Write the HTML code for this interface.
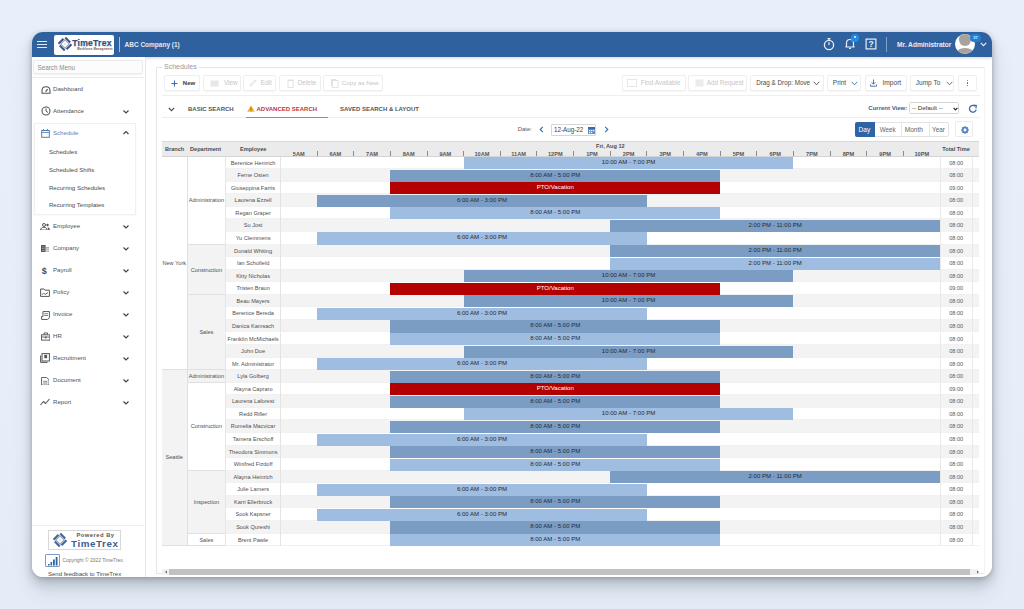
<!DOCTYPE html>
<html><head><meta charset="utf-8">
<style>
*{box-sizing:border-box;margin:0;padding:0}
html,body{width:1024px;height:609px;overflow:hidden}
body{font-family:"Liberation Sans",sans-serif;background:linear-gradient(180deg,#e8effa 0%,#e6eef9 60%,#e4ecf7 100%);position:relative}
.abs{position:absolute}
#win{position:absolute;left:32px;top:32px;width:960px;height:544.7px;border-radius:11px;background:#fff;overflow:hidden;box-shadow:0 1px 5px rgba(50,58,70,.28),0 7px 12px rgba(50,58,70,.22),0 14px 22px rgba(50,58,70,.10)}
#L{position:absolute;left:-32px;top:-32px;width:1024px;height:609px}
.menu{position:absolute;left:53px;font-size:6.1px;color:#505050;line-height:8px;margin-top:-0.5px}
.chev{position:absolute;left:122px;width:8px;height:6px}
.sub{position:absolute;left:49px;font-size:6.05px;color:#4a4a4a;line-height:8px;margin-top:-0.9px}
.btn{position:absolute;top:75.3px;height:15.7px;border:0.8px solid #efefef;border-radius:2px;background:#fff;font-size:6.6px;line-height:12px;color:#c6c6c6;white-space:nowrap;box-shadow:0 0.5px 1px rgba(0,0,0,.04)}
.btn.on{color:#333}
.btn span{top:1.1px}
/* grid */
.rw{position:absolute;left:162px;width:816.5px;height:12.564px;border-bottom:0.5px solid #f1f1f1}
.emp{position:absolute;left:225.2px;width:55.8px;height:12.55px;line-height:12.55px;text-align:center;font-size:5.6px;color:#505050;white-space:nowrap;border-left:0.6px solid #e6e6e6;border-right:0.6px solid #e3e3e3}
.tt{position:absolute;left:939.7px;width:33px;height:12.564px;line-height:12.564px;text-align:center;font-size:5.6px;color:#5a5a5a;border-left:0.6px solid #e9e9e9;border-right:0.6px solid #e9e9e9}
.bar{position:absolute;height:12.1px;line-height:11.4px;text-align:center;font-size:6.05px;color:#232b36;white-space:nowrap;overflow:hidden}
.bar.lt{background:#9ebde0}
.bar.dk{background:#7b9cc3}
.bar.red{background:#b30000;color:#fff}
.dept{position:absolute;left:187.5px;width:37.8px;text-align:center;font-size:5.6px;color:#505050;white-space:nowrap;border-bottom:0.6px solid #e0e0e0}
.br{position:absolute;left:162px;width:25.5px;text-align:center;font-size:5.6px;color:#505050;white-space:nowrap;border-right:0.6px solid #e0e0e0;border-bottom:0.6px solid #e0e0e0}
.hl{position:absolute;top:149.5px;width:36px;text-align:center;font-size:5.6px;font-weight:bold;color:#555;line-height:8px}
.tk{position:absolute;top:150.8px;width:0.9px;height:5px;background:#8a8a8a}
.hdr{position:absolute;top:145px;font-size:5.6px;font-weight:bold;color:#4d4d4d;line-height:8px}
</style></head><body>
<div id="win">
<div id="L">
  <!-- HEADER -->
  <div class="abs" style="left:32px;top:32px;width:960px;height:24.5px;background:#2e619e;box-shadow:0 1px 3px rgba(0,0,0,.18)"></div>
  <div class="abs" style="left:37px;top:41px;width:10px;height:1.3px;background:#dfe8f4"></div>
  <div class="abs" style="left:37px;top:44px;width:10px;height:1.3px;background:#dfe8f4"></div>
  <div class="abs" style="left:37px;top:47px;width:10px;height:1.3px;background:#dfe8f4"></div>
  <div class="abs" style="left:54px;top:34.8px;width:60.2px;height:19.8px;background:#fff;border-radius:2px">
    <svg class="abs" style="left:2.6px;top:1.6px" width="16" height="16" viewBox="0 0 16 16">
      <g transform="rotate(45 8 8)">
        <rect x="3.6" y="2.2" width="7" height="2" fill="#3f5688"/>
        <rect x="11.8" y="3.6" width="2" height="7" fill="#3f5688"/>
        <rect x="5.4" y="11.8" width="7" height="2" fill="#3f5688"/>
        <rect x="2.2" y="5.4" width="2" height="7" fill="#3f5688"/>
        <rect x="5" y="5" width="6" height="6" fill="none" stroke="#a3adbf" stroke-width="1.3"/>
        <rect x="7.3" y="7.3" width="1.4" height="1.4" fill="#c8ced8"/>
      </g>
    </svg>
    <div class="abs" style="left:18.2px;top:3.2px;font-size:8.6px;font-weight:bold;color:#34507f;letter-spacing:0.25px;line-height:10px;-webkit-text-stroke:0.25px #34507f">TimeTrex</div>
    <div class="abs" style="left:23px;top:12.3px;font-size:2.9px;font-weight:bold;color:#6e5247;line-height:4px;letter-spacing:0.15px">Workforce Management</div>
  </div>
  <div class="abs" style="left:119px;top:37px;width:0.8px;height:15px;background:#a9c0dd"></div>
  <div class="abs" style="left:124.5px;top:39.5px;font-size:6.5px;font-weight:bold;color:#e3ebf6;line-height:9px">ABC Company (1)</div>
  <svg class="abs" style="left:823px;top:37px" width="12" height="14" viewBox="0 0 12 14">
    <circle cx="6" cy="8" r="4.6" fill="none" stroke="#e8eef7" stroke-width="1.3"/>
    <rect x="4.5" y="1" width="3" height="1.2" fill="#e8eef7"/>
    <line x1="6" y1="2" x2="6" y2="3.4" stroke="#e8eef7" stroke-width="1.2"/>
    <line x1="6" y1="8" x2="6" y2="5.3" stroke="#e8eef7" stroke-width="1.2"/>
  </svg>
  <svg class="abs" style="left:843.8px;top:36px" width="12" height="14" viewBox="0 0 12 14">
    <path d="M2.5 10.5 L2.5 7 Q2.5 3.5 6 3.5 Q9.5 3.5 9.5 7 L9.5 10.5 L10.5 11 L1.5 11 Z" fill="none" stroke="#e8eef7" stroke-width="1.2"/>
    <path d="M5 12.3 L7 12.3" stroke="#e8eef7" stroke-width="1.2"/>
  </svg>
  <div class="abs" style="left:851px;top:34px;width:7.6px;height:7.6px;border-radius:50%;background:#238be6"><div class="abs" style="left:3.1px;top:2.4px;width:1.6px;height:1.6px;border-radius:50%;background:#d8ebfb"></div></div>
  <svg class="abs" style="left:864.8px;top:38px" width="12" height="12" viewBox="0 0 12 12">
    <rect x="1.1" y="1.1" width="9.8" height="9.8" fill="none" stroke="#e8eef7" stroke-width="1.2"/>
    <text x="6" y="9.3" font-size="8.6" font-family="Liberation Sans" font-weight="bold" fill="#e8eef7" text-anchor="middle">?</text>
  </svg>
  <div class="abs" style="left:886px;top:37px;width:0.8px;height:15px;background:#7fa0c8"></div>
  <div class="abs" style="left:897px;top:40.5px;font-size:6.6px;font-weight:bold;color:#e8eef7;line-height:8px">Mr. Administrator</div>
  <div class="abs" style="left:954.8px;top:34.4px;width:20.2px;height:20px;border-radius:50%;background:#fff;overflow:hidden">
    <div class="abs" style="left:3.8px;top:-1px;width:12px;height:12.5px;border-radius:50%;background:#a8a29e"></div>
    <div class="abs" style="left:0px;top:13.5px;width:20px;height:14px;border-radius:50%;background:#a8a29e"></div>
  </div>
  <div class="abs" style="left:970px;top:34px;width:11px;height:8.2px;border-radius:4px;background:#1f7fd6;font-size:4px;font-weight:bold;color:#e6f0fb;text-align:center;line-height:8.2px">37</div>
  <svg class="abs" style="left:979.7px;top:42px" width="7" height="5" viewBox="0 0 7 5"><path d="M0.8 0.8 L3.5 3.6 L6.2 0.8" fill="none" stroke="#e8eef7" stroke-width="1.2"/></svg>

  <!-- SIDEBAR -->
  <div class="abs" style="left:32px;top:56.5px;width:114px;height:520px;background:#fff;border-right:1px solid #e6e6e6"></div>
  <div class="abs" style="left:33.3px;top:59.6px;width:110.2px;height:14.6px;border:0.8px solid #ebebeb;background:#fcfcfc;border-radius:1.5px;box-shadow:0 0.8px 1.2px rgba(0,0,0,.06)"></div>
  <div class="abs" style="left:37.5px;top:63.5px;font-size:6.3px;color:#8a8a8a;line-height:8px">Search Menu</div>
  <div class="abs" style="left:32px;top:77px;width:114px;height:0.8px;background:#ececec"></div>
    <!-- menu items -->
  <svg class="abs" style="left:40.5px;top:85.5px" width="10" height="8" viewBox="0 0 10 8"><path d="M1 7.3 L1 4.5 Q1 0.8 5 0.8 Q9 0.8 9 4.5 L9 7.3 Z" fill="none" stroke="#555" stroke-width="1.1" stroke-linejoin="round"/><line x1="4.6" y1="5.6" x2="6.6" y2="3.2" stroke="#555" stroke-width="1.2"/></svg>
  <div class="menu" style="top:85px">Dashboard</div>

  <svg class="abs" style="left:40.5px;top:106px" width="10" height="10" viewBox="0 0 10 10"><circle cx="5" cy="5" r="4" fill="none" stroke="#555" stroke-width="1.1"/><path d="M5 2.5 L5 5 L7 6.5" fill="none" stroke="#555" stroke-width="1"/></svg>
  <div class="menu" style="top:107px">Attendance</div>
  <svg class="chev" style="top:108.5px" viewBox="0 0 8 6"><path d="M1.5 1.5 L4 4 L6.5 1.5" fill="none" stroke="#444" stroke-width="1.2"/></svg>

  <div class="abs" style="left:34.3px;top:122.8px;width:101.7px;height:92px;border:0.8px solid #f0f0f0;background:#fff;box-shadow:0 0.5px 1.5px rgba(0,0,0,.06)"></div>
  <svg class="abs" style="left:40.5px;top:128.8px" width="9" height="9" viewBox="0 0 9 9"><rect x="0.7" y="1.5" width="7.6" height="6.8" fill="none" stroke="#4f7db8" stroke-width="1"/><line x1="0.7" y1="3.5" x2="8.3" y2="3.5" stroke="#4f7db8" stroke-width="0.8"/><line x1="2.5" y1="0" x2="2.5" y2="2.2" stroke="#4f7db8" stroke-width="0.9"/><line x1="6.5" y1="0" x2="6.5" y2="2.2" stroke="#4f7db8" stroke-width="0.9"/></svg>
  <div class="menu" style="top:129px;color:#5783bb">Schedule</div>
  <svg class="chev" style="top:130px" viewBox="0 0 8 6"><path d="M1.5 4 L4 1.5 L6.5 4" fill="none" stroke="#444" stroke-width="1.2"/></svg>
  <div class="sub" style="top:149px">Schedules</div>
  <div class="sub" style="top:167.2px">Scheduled Shifts</div>
  <div class="sub" style="top:184.8px">Recurring Schedules</div>
  <div class="sub" style="top:202.2px">Recurring Templates</div>

  <svg class="abs" style="left:40px;top:222.6px" width="10" height="7.6" viewBox="0 0 10 7.6"><circle cx="4" cy="2" r="1.5" fill="none" stroke="#555" stroke-width="1"/><path d="M0.6 7.1 C0.6 5.2 2 4.3 3.9 4.3 C5.8 4.3 7.2 5.2 7.2 7.1 Z" fill="none" stroke="#555" stroke-width="1" stroke-linejoin="round"/><circle cx="7.5" cy="2" r="1.2" fill="#555"/><path d="M7.6 4.2 C9 4.3 9.8 5.2 9.8 7.3 L8.2 7.3 C8.2 5.8 8 5 7.6 4.2 Z" fill="#555"/></svg>
  <div class="menu" style="top:222px">Employee</div>
  <svg class="chev" style="top:223.5px" viewBox="0 0 8 6"><path d="M1.5 1.5 L4 4 L6.5 1.5" fill="none" stroke="#444" stroke-width="1.2"/></svg>

  <svg class="abs" style="left:40.8px;top:244.6px" width="8.6" height="7.6" viewBox="0 0 8.6 7.6"><rect x="0" y="0" width="4.6" height="7.6" fill="#555"/><rect x="4.6" y="2" width="3.8" height="5.6" fill="#9a9a9a"/><rect x="5.2" y="2.6" width="2.6" height="4.4" fill="#d0d0d0"/><rect x="0.8" y="1.6" width="3" height="0.6" fill="#bbb"/><rect x="0.8" y="3.4" width="3" height="0.6" fill="#bbb"/><rect x="0.8" y="5.2" width="3" height="0.6" fill="#bbb"/></svg>
  <div class="menu" style="top:244px">Company</div>
  <svg class="chev" style="top:245.5px" viewBox="0 0 8 6"><path d="M1.5 1.5 L4 4 L6.5 1.5" fill="none" stroke="#444" stroke-width="1.2"/></svg>

  <div class="abs" style="left:41.8px;top:265.5px;font-size:9px;font-weight:bold;color:#4a4a4a;line-height:10px">$</div>
  <div class="menu" style="top:266px">Payroll</div>
  <svg class="chev" style="top:267.5px" viewBox="0 0 8 6"><path d="M1.5 1.5 L4 4 L6.5 1.5" fill="none" stroke="#444" stroke-width="1.2"/></svg>

  <svg class="abs" style="left:40px;top:287.5px" width="10" height="9" viewBox="0 0 10 9"><path d="M0.6 1 L4 1 L5 2.2 L9.4 2.2 L9.4 8.4 L0.6 8.4 Z" fill="none" stroke="#555" stroke-width="1"/><path d="M2 6.8 L3.5 5 L5 6.5 L8 4.5" fill="none" stroke="#555" stroke-width="0.9"/></svg>
  <div class="menu" style="top:288px">Policy</div>
  <svg class="chev" style="top:289.5px" viewBox="0 0 8 6"><path d="M1.5 1.5 L4 4 L6.5 1.5" fill="none" stroke="#444" stroke-width="1.2"/></svg>

  <svg class="abs" style="left:40.8px;top:310.5px" width="9" height="9" viewBox="0 0 9 10" preserveAspectRatio="none"><path d="M2 0.6 L8.4 0.6 L8.4 7.5 L6.5 9.4 L0.6 9.4 L0.6 6 L2 6 Z" fill="none" stroke="#555" stroke-width="1"/><line x1="3.3" y1="3" x2="7" y2="3" stroke="#555" stroke-width="0.8"/><line x1="3.3" y1="5" x2="7" y2="5" stroke="#555" stroke-width="0.8"/></svg>
  <div class="menu" style="top:310px">Invoice</div>
  <svg class="chev" style="top:311.5px" viewBox="0 0 8 6"><path d="M1.5 1.5 L4 4 L6.5 1.5" fill="none" stroke="#444" stroke-width="1.2"/></svg>

  <svg class="abs" style="left:40.5px;top:332px" width="9.5" height="8.5" viewBox="0 0 10 9" preserveAspectRatio="none"><rect x="0.6" y="3" width="8.8" height="5.6" fill="none" stroke="#555" stroke-width="1"/><path d="M3.2 3 L3.2 1 L6.8 1 L6.8 3" fill="none" stroke="#555" stroke-width="1"/><line x1="0.6" y1="5.3" x2="9.4" y2="5.3" stroke="#555" stroke-width="0.9"/><circle cx="5" cy="5.8" r="1" fill="#555"/></svg>
  <div class="menu" style="top:332px">HR</div>
  <svg class="chev" style="top:333.5px" viewBox="0 0 8 6"><path d="M1.5 1.5 L4 4 L6.5 1.5" fill="none" stroke="#444" stroke-width="1.2"/></svg>

  <svg class="abs" style="left:40px;top:353px" width="10" height="10" viewBox="0 0 10 10"><rect x="2" y="0.6" width="7.4" height="7.4" fill="none" stroke="#555" stroke-width="1"/><path d="M0.6 2.5 L0.6 9.4 L7.5 9.4" fill="none" stroke="#555" stroke-width="1"/><rect x="4.3" y="1.8" width="2.8" height="3.4" fill="#555"/></svg>
  <div class="menu" style="top:354px">Recruitment</div>
  <svg class="chev" style="top:355.5px" viewBox="0 0 8 6"><path d="M1.5 1.5 L4 4 L6.5 1.5" fill="none" stroke="#444" stroke-width="1.2"/></svg>

  <svg class="abs" style="left:40.8px;top:376.8px" width="8.6" height="8.6" viewBox="0 0 9 10" preserveAspectRatio="none"><path d="M0.6 0.6 L5.8 0.6 L8.4 3.2 L8.4 9.4 L0.6 9.4 Z" fill="none" stroke="#555" stroke-width="1"/><line x1="2.3" y1="5" x2="6.7" y2="5" stroke="#555" stroke-width="0.8"/><line x1="2.3" y1="7" x2="6.7" y2="7" stroke="#555" stroke-width="0.8"/></svg>
  <div class="menu" style="top:376px">Document</div>
  <svg class="chev" style="top:377.5px" viewBox="0 0 8 6"><path d="M1.5 1.5 L4 4 L6.5 1.5" fill="none" stroke="#444" stroke-width="1.2"/></svg>

  <svg class="abs" style="left:40px;top:398px" width="10" height="8" viewBox="0 0 10 8"><path d="M0.5 7 L3.5 3.5 L5.5 5.5 L9.5 1" fill="none" stroke="#555" stroke-width="1.1"/></svg>
  <div class="menu" style="top:398px">Report</div>
  <svg class="chev" style="top:399.5px" viewBox="0 0 8 6"><path d="M1.5 1.5 L4 4 L6.5 1.5" fill="none" stroke="#444" stroke-width="1.2"/></svg>

  <!-- footer -->
  <div class="abs" style="left:32px;top:524.5px;width:114px;height:0.8px;background:#efefef"></div>
  <div class="abs" style="left:48.4px;top:529.5px;width:72.2px;height:20px;border:0.8px solid #d8d8d8;background:#fff">
    <svg class="abs" style="left:2.5px;top:1.5px" width="16" height="16" viewBox="0 0 16 16">
      <g transform="rotate(45 8 8)">
        <rect x="3.6" y="2.2" width="7" height="2.1" fill="#46659a"/>
        <rect x="11.7" y="3.6" width="2.1" height="7" fill="#46659a"/>
        <rect x="5.4" y="11.7" width="7" height="2.1" fill="#46659a"/>
        <rect x="2.2" y="5.4" width="2.1" height="7" fill="#46659a"/>
        <rect x="5" y="5" width="6" height="6" fill="none" stroke="#9aa7bd" stroke-width="1.3"/>
        <rect x="7.3" y="7.3" width="1.4" height="1.4" fill="#c8ced8"/>
      </g>
    </svg>
    <div class="abs" style="left:27px;top:1.6px;font-size:5.8px;font-weight:bold;color:#575757;line-height:7px;letter-spacing:0.5px">Powered By</div>
    <div class="abs" style="left:21.6px;top:7.2px;font-size:9.8px;font-weight:bold;color:#3d5f93;line-height:11px;letter-spacing:0.6px">TimeTrex</div>
  </div>
  <div class="abs" style="left:44.5px;top:554px;width:15.2px;height:13px;border:0.8px solid #7c9ac7;border-radius:1px;background:#fff">
    <svg class="abs" style="left:1.5px;top:1px" width="12" height="10" viewBox="0 0 12 10"><rect x="1" y="8" width="1.6" height="1.5" fill="#2f63a6"/><rect x="3.5" y="6" width="1.6" height="3.5" fill="#2f63a6"/><rect x="6" y="3.5" width="1.8" height="6" fill="#2f63a6"/><rect x="8.7" y="1" width="1.8" height="8.5" fill="#2f63a6"/></svg>
  </div>
  <div class="abs" style="left:62.5px;top:556.5px;font-size:4.95px;color:#777;line-height:7px">Copyright © 2022 TimeTrex.</div>
  <div class="abs" style="left:48px;top:570.5px;font-size:6px;color:#4a4a4a;line-height:7px;text-decoration:underline">Send feedback to TimeTrex</div>


  <!-- CONTENT -->
    <!-- fieldset -->
  <div class="abs" style="left:156.1px;top:67px;width:828.9px;height:506.8px;border:0.8px solid #e6e6e6;border-right-color:#f3f3f3"></div>
  <div class="abs" style="left:162px;top:62px;padding:0 2px;background:#fff;font-size:7px;color:#999;line-height:9px">Schedules</div>

  <!-- toolbar -->
  <div class="btn on" style="left:164.3px;width:35.7px">
    <svg class="abs" style="left:5.5px;top:3.5px" width="7" height="7" viewBox="0 0 7 7"><path d="M3.5 0.5 V6.5 M0.5 3.5 H6.5" stroke="#3b6db0" stroke-width="1.1"/></svg>
    <span class="abs" style="left:17.5px;font-weight:bold;font-size:6px;color:#3a3a3a">New</span>
  </div>
  <div class="btn" style="left:202.9px;width:38px">
    <svg class="abs" style="left:6px;top:3.5px" width="9" height="7" viewBox="0 0 9 7"><rect x="0.5" y="0.5" width="8" height="6" fill="#e8e8e8"/></svg>
    <span class="abs" style="left:20px;font-size:6.4px">View</span>
  </div>
  <div class="btn" style="left:242.8px;width:33.6px">
    <svg class="abs" style="left:5.5px;top:3px" width="8" height="8" viewBox="0 0 8 8"><path d="M1 7 L2 4.5 L6 0.8 L7.2 2 L3.5 5.8 Z" fill="none" stroke="#d8d8d8" stroke-width="0.8"/></svg>
    <span class="abs" style="left:17px;font-size:6.4px">Edit</span>
  </div>
  <div class="btn" style="left:278.75px;width:41.85px">
    <svg class="abs" style="left:7px;top:2.5px" width="7" height="9" viewBox="0 0 7 9"><rect x="1" y="1.5" width="5" height="7" fill="none" stroke="#dcdcdc" stroke-width="0.8"/><line x1="0.5" y1="1" x2="6.5" y2="1" stroke="#dcdcdc" stroke-width="0.8"/></svg>
    <span class="abs" style="left:18px;font-size:6.4px">Delete</span>
  </div>
  <div class="btn" style="left:323.3px;width:59.4px">
    <svg class="abs" style="left:7px;top:2.5px" width="8" height="9" viewBox="0 0 8 9"><rect x="1.5" y="1.5" width="5.5" height="7" fill="none" stroke="#dcdcdc" stroke-width="0.8"/><path d="M0.5 7 V0.5 H5" fill="none" stroke="#dcdcdc" stroke-width="0.8"/></svg>
    <span class="abs" style="left:17.5px;font-size:6.2px">Copy as New</span>
  </div>

  <div class="btn" style="left:622.3px;width:63.3px">
    <svg class="abs" style="left:4px;top:3px" width="10" height="8" viewBox="0 0 10 8"><rect x="0.5" y="0.5" width="9" height="7" fill="none" stroke="#e2e2e2" stroke-width="0.8"/></svg>
    <span class="abs" style="left:17.5px;font-size:6.4px">Find Available</span>
  </div>
  <div class="btn" style="left:688.2px;width:58.6px">
    <svg class="abs" style="left:5.5px;top:3px" width="9" height="8" viewBox="0 0 9 8"><rect x="0.5" y="0.5" width="8" height="7" fill="#ececec"/></svg>
    <span class="abs" style="left:17.5px;font-size:6.4px">Add Request</span>
  </div>
  <div class="btn on" style="left:750.4px;width:73.6px">
    <span class="abs" style="left:4.8px;font-size:6.3px;color:#4a4a4a">Drag &amp; Drop: Move</span>
    <svg class="abs" style="left:62px;top:4.5px" width="7" height="5" viewBox="0 0 7 5"><path d="M0.7 0.8 L3.5 3.8 L6.3 0.8" fill="none" stroke="#4a4a4a" stroke-width="0.9"/></svg>
  </div>
  <div class="btn on" style="left:827px;width:34px">
    <span class="abs" style="left:4.8px;font-size:6.5px;color:#4a4a4a">Print</span>
    <svg class="abs" style="left:23px;top:4.5px" width="7" height="5" viewBox="0 0 7 5"><path d="M0.7 0.8 L3.5 3.8 L6.3 0.8" fill="none" stroke="#3d6aa8" stroke-width="0.9"/></svg>
  </div>
  <div class="btn on" style="left:865px;width:41.6px">
    <svg class="abs" style="left:3.5px;top:3px" width="7" height="8" viewBox="0 0 7 8"><path d="M3.5 0.5 V5 M1.5 3.2 L3.5 5.2 L5.5 3.2 M0.5 5.5 V7.2 H6.5 V5.5" fill="none" stroke="#3d6aa8" stroke-width="0.9"/></svg>
    <span class="abs" style="left:16.5px;font-size:6.6px;color:#4a4a4a">Import</span>
  </div>
  <div class="btn on" style="left:910px;width:44px">
    <span class="abs" style="left:4.8px;font-size:6.5px;color:#4a4a4a">Jump To</span>
    <svg class="abs" style="left:34.5px;top:4.5px" width="7" height="5" viewBox="0 0 7 5"><path d="M0.7 0.8 L3.5 3.8 L6.3 0.8" fill="none" stroke="#3d6aa8" stroke-width="0.9"/></svg>
  </div>
  <div class="btn on" style="left:957.6px;width:19px">
    <div class="abs" style="left:8px;top:3.3px;width:1.3px;height:1.3px;background:#3d6aa8;border-radius:50%"></div>
    <div class="abs" style="left:8px;top:6px;width:1.3px;height:1.3px;background:#3d6aa8;border-radius:50%"></div>
    <div class="abs" style="left:8px;top:8.7px;width:1.3px;height:1.3px;background:#3d6aa8;border-radius:50%"></div>
  </div>
  <div class="abs" style="left:162px;top:94.7px;width:818px;height:0.8px;background:#efefef"></div>

  <!-- tabs -->
  <svg class="abs" style="left:167.5px;top:106.5px" width="7" height="5" viewBox="0 0 7 5"><path d="M0.8 0.8 L3.5 3.6 L6.2 0.8" fill="none" stroke="#444" stroke-width="1.1"/></svg>
  <div class="abs" style="left:188px;top:104.5px;font-size:6px;font-weight:bold;color:#555;line-height:8px">BASIC SEARCH</div>
  <svg class="abs" style="left:247px;top:105px" width="8" height="7" viewBox="0 0 8 7"><path d="M4 0.3 L7.8 6.8 L0.2 6.8 Z" fill="#f2b134"/><rect x="3.6" y="2.4" width="0.8" height="2.5" fill="#8a5a00"/><rect x="3.6" y="5.4" width="0.8" height="0.8" fill="#8a5a00"/></svg>
  <div class="abs" style="left:256.5px;top:104.5px;font-size:6px;font-weight:bold;color:#c23636;line-height:8px">ADVANCED SEARCH</div>
  <div class="abs" style="left:340px;top:104.5px;font-size:6px;font-weight:bold;color:#555;line-height:8px">SAVED SEARCH &amp; LAYOUT</div>
  <div class="abs" style="left:162px;top:117.3px;width:818px;height:0.8px;background:#eeeeee"></div>
  <div class="abs" style="left:245.8px;top:116.5px;width:82px;height:1.5px;background:#5b9be0"></div>

  <div class="abs" style="left:868.3px;top:104px;font-size:6px;font-weight:bold;color:#3b5e93;line-height:8px">Current View:</div>
  <div class="abs" style="left:908.5px;top:102.4px;width:50px;height:12px;border:0.8px solid #d6d6d6;border-radius:1.5px;background:#fff">
    <span class="abs" style="left:2.5px;top:0.9px;font-size:6.1px;color:#333;line-height:8px">-- Default --</span>
    <svg class="abs" style="left:43px;top:3.8px" width="5" height="4" viewBox="0 0 5 4"><path d="M0.6 0.8 L2.5 2.9 L4.4 0.8" fill="none" stroke="#222" stroke-width="1.1"/></svg>
  </div>
  <svg class="abs" style="left:967.8px;top:103.8px" width="10" height="10" viewBox="0 0 10 10"><path d="M8.2 5.6 A3.4 3.4 0 1 1 7.2 2.3" fill="none" stroke="#3d6aa8" stroke-width="1.3"/><path d="M5.6 1.2 L8.3 1.6 L7.9 4.3" fill="none" stroke="#3d6aa8" stroke-width="1.2"/></svg>

  <!-- date -->
  <div class="abs" style="left:517.8px;top:125px;font-size:5.9px;color:#555;line-height:8px">Date:</div>
  <svg class="abs" style="left:539px;top:126px" width="5" height="7" viewBox="0 0 5 7"><path d="M3.8 0.8 L1.2 3.5 L3.8 6.2" fill="none" stroke="#3d6aa8" stroke-width="1.1"/></svg>
  <div class="abs" style="left:550.9px;top:123.5px;width:45.5px;height:12px;border:0.8px solid #d6d6d6;border-radius:1px;background:#fff">
    <span class="abs" style="left:2px;top:1.5px;font-size:6.3px;color:#444;line-height:8px">12-Aug-22</span>
    <svg class="abs" style="left:36px;top:2px" width="7" height="7" viewBox="0 0 7 7"><rect x="0" y="0" width="7" height="7" fill="#5f8ac0"/><rect x="0" y="0" width="7" height="2" fill="#3c6aa5"/><rect x="1" y="3" width="1.3" height="1.2" fill="#fff"/><rect x="3" y="3" width="1.3" height="1.2" fill="#fff"/><rect x="5" y="3" width="1.3" height="1.2" fill="#fff"/><rect x="1" y="5" width="1.3" height="1.2" fill="#fff"/><rect x="3" y="5" width="1.3" height="1.2" fill="#fff"/></svg>
  </div>
  <svg class="abs" style="left:604px;top:126px" width="5" height="7" viewBox="0 0 5 7"><path d="M1.2 0.8 L3.8 3.5 L1.2 6.2" fill="none" stroke="#3d6aa8" stroke-width="1.1"/></svg>

  <!-- view buttons -->
  <div class="abs" style="left:855px;top:122.3px;width:93.5px;height:14.3px;border:0.8px solid #e3e3e3;border-radius:2px;background:#fff"></div>
  <div class="abs" style="left:855px;top:122.3px;width:20px;height:14.3px;background:#2d64a6;border-radius:2px 0 0 2px"></div>
  <div class="abs" style="left:858.5px;top:125.5px;font-size:6.6px;color:#fff;line-height:8px">Day</div>
  <div class="abs" style="left:900.6px;top:122.3px;width:0.8px;height:14.3px;background:#e6e6e6"></div>
  <div class="abs" style="left:928.6px;top:122.3px;width:0.8px;height:14.3px;background:#e6e6e6"></div>
  <div class="abs" style="left:879.7px;top:125.5px;font-size:6.3px;color:#666;line-height:8px">Week</div>
  <div class="abs" style="left:904.7px;top:125.5px;font-size:6.6px;color:#666;line-height:8px">Month</div>
  <div class="abs" style="left:932px;top:125.5px;font-size:6.4px;color:#666;line-height:8px">Year</div>
  <div class="abs" style="left:955px;top:121.3px;width:18px;height:15.5px;border:0.8px solid #ececec;border-radius:2px;background:#fff">
    <svg class="abs" style="left:4.8px;top:3.7px" width="8" height="8" viewBox="0 0 8 8"><path d="M4 0.3 L5 1.3 L6.6 1.4 L6.7 3 L7.7 4 L6.7 5 L6.6 6.6 L5 6.7 L4 7.7 L3 6.7 L1.4 6.6 L1.3 5 L0.3 4 L1.3 3 L1.4 1.4 L3 1.3 Z" fill="#5b86c4" stroke="#3d6aa8" stroke-width="0.6"/><circle cx="4" cy="4" r="1.4" fill="#fff"/></svg>
  </div>

  <!-- grid header -->
  <div class="abs" style="left:162px;top:141.3px;width:816.7px;height:15.3px;background:#ebebeb;border-top:0.8px solid #d9d9d9;border-bottom:0.8px solid #d4d4d4"></div>
  <div class="hdr" style="left:165px">Branch</div>
  <div class="hdr" style="left:190px">Department</div>
  <div class="hdr" style="left:240px">Employee</div>
  <div class="hdr" style="left:596px;top:142.2px">Fri, Aug 12</div>
  <div class="hdr" style="left:942.3px">Total Time</div>

  <!-- scrollbar -->
  <div class="abs" style="left:162px;top:569px;width:816px;height:5.5px;background:#f1f1f1"></div>
  <div class="abs" style="left:169.3px;top:569.2px;width:801px;height:5.5px;background:#c1c1c1"></div>
  <svg class="abs" style="left:163.5px;top:569.8px" width="4" height="4" viewBox="0 0 4 4"><path d="M3 0.5 L1 2 L3 3.5 Z" fill="#666"/></svg>
  <svg class="abs" style="left:975.5px;top:569.8px" width="4" height="4" viewBox="0 0 4 4"><path d="M1 0.5 L3 2 L1 3.5 Z" fill="#666"/></svg>

  <div class="rw" style="top:156.60px;background:#fff"></div>
<div class="rw" style="top:169.16px;background:#f3f3f3"></div>
<div class="rw" style="top:181.73px;background:#fff"></div>
<div class="rw" style="top:194.29px;background:#f3f3f3"></div>
<div class="rw" style="top:206.86px;background:#fff"></div>
<div class="rw" style="top:219.42px;background:#f3f3f3"></div>
<div class="rw" style="top:231.98px;background:#fff"></div>
<div class="rw" style="top:244.55px;background:#f3f3f3"></div>
<div class="rw" style="top:257.11px;background:#fff"></div>
<div class="rw" style="top:269.68px;background:#f3f3f3"></div>
<div class="rw" style="top:282.24px;background:#fff"></div>
<div class="rw" style="top:294.80px;background:#f3f3f3"></div>
<div class="rw" style="top:307.37px;background:#fff"></div>
<div class="rw" style="top:319.93px;background:#f3f3f3"></div>
<div class="rw" style="top:332.50px;background:#fff"></div>
<div class="rw" style="top:345.06px;background:#f3f3f3"></div>
<div class="rw" style="top:357.62px;background:#fff"></div>
<div class="rw" style="top:370.19px;background:#f3f3f3"></div>
<div class="rw" style="top:382.75px;background:#fff"></div>
<div class="rw" style="top:395.32px;background:#f3f3f3"></div>
<div class="rw" style="top:407.88px;background:#fff"></div>
<div class="rw" style="top:420.44px;background:#f3f3f3"></div>
<div class="rw" style="top:433.01px;background:#fff"></div>
<div class="rw" style="top:445.57px;background:#f3f3f3"></div>
<div class="rw" style="top:458.14px;background:#fff"></div>
<div class="rw" style="top:470.70px;background:#f3f3f3"></div>
<div class="rw" style="top:483.26px;background:#fff"></div>
<div class="rw" style="top:495.83px;background:#f3f3f3"></div>
<div class="rw" style="top:508.39px;background:#fff"></div>
<div class="rw" style="top:520.96px;background:#f3f3f3"></div>
<div class="rw" style="top:533.52px;background:#fff"></div>
<div class="emp" style="top:156.60px">Berenice Hemrich</div>
<div class="tt" style="top:156.60px">08:00</div>
<div class="emp" style="top:169.16px">Ferne Osten</div>
<div class="tt" style="top:169.16px">08:00</div>
<div class="emp" style="top:181.73px">Giuseppina Farris</div>
<div class="tt" style="top:181.73px">09:00</div>
<div class="emp" style="top:194.29px">Laurena Ezzell</div>
<div class="tt" style="top:194.29px">08:00</div>
<div class="emp" style="top:206.86px">Regan Graper</div>
<div class="tt" style="top:206.86px">08:00</div>
<div class="emp" style="top:219.42px">Su Jost</div>
<div class="tt" style="top:219.42px">08:00</div>
<div class="emp" style="top:231.98px">Yu Clemmens</div>
<div class="tt" style="top:231.98px">08:00</div>
<div class="emp" style="top:244.55px">Donald Whiting</div>
<div class="tt" style="top:244.55px">08:00</div>
<div class="emp" style="top:257.11px">Ian Schofield</div>
<div class="tt" style="top:257.11px">08:00</div>
<div class="emp" style="top:269.68px">Kitty Nicholas</div>
<div class="tt" style="top:269.68px">08:00</div>
<div class="emp" style="top:282.24px">Tristen Braun</div>
<div class="tt" style="top:282.24px">09:00</div>
<div class="emp" style="top:294.80px">Beau Mayers</div>
<div class="tt" style="top:294.80px">08:00</div>
<div class="emp" style="top:307.37px">Berenice Bereda</div>
<div class="tt" style="top:307.37px">08:00</div>
<div class="emp" style="top:319.93px">Danica Kamsach</div>
<div class="tt" style="top:319.93px">08:00</div>
<div class="emp" style="top:332.50px">Franklin McMichaels</div>
<div class="tt" style="top:332.50px">08:00</div>
<div class="emp" style="top:345.06px">John Doe</div>
<div class="tt" style="top:345.06px">08:00</div>
<div class="emp" style="top:357.62px">Mr. Administrator</div>
<div class="tt" style="top:357.62px">08:00</div>
<div class="emp" style="top:370.19px">Lyla Golberg</div>
<div class="tt" style="top:370.19px">08:00</div>
<div class="emp" style="top:382.75px">Alayna Capraro</div>
<div class="tt" style="top:382.75px">09:00</div>
<div class="emp" style="top:395.32px">Laurena Laforest</div>
<div class="tt" style="top:395.32px">08:00</div>
<div class="emp" style="top:407.88px">Redd Rifler</div>
<div class="tt" style="top:407.88px">08:00</div>
<div class="emp" style="top:420.44px">Romelia Macvicar</div>
<div class="tt" style="top:420.44px">08:00</div>
<div class="emp" style="top:433.01px">Tamera Erschoff</div>
<div class="tt" style="top:433.01px">08:00</div>
<div class="emp" style="top:445.57px">Theodora Simmons</div>
<div class="tt" style="top:445.57px">08:00</div>
<div class="emp" style="top:458.14px">Winifred Fizdoff</div>
<div class="tt" style="top:458.14px">08:00</div>
<div class="emp" style="top:470.70px">Alayna Heinrich</div>
<div class="tt" style="top:470.70px">08:00</div>
<div class="emp" style="top:483.26px">Julie Lamers</div>
<div class="tt" style="top:483.26px">08:00</div>
<div class="emp" style="top:495.83px">Karri Ellerbrock</div>
<div class="tt" style="top:495.83px">08:00</div>
<div class="emp" style="top:508.39px">Sook Kapsner</div>
<div class="tt" style="top:508.39px">08:00</div>
<div class="emp" style="top:520.96px">Sook Qureshi</div>
<div class="tt" style="top:520.96px">08:00</div>
<div class="emp" style="top:533.52px">Brent Pawle</div>
<div class="tt" style="top:533.52px">08:00</div>
<div class="bar lt" style="top:157.10px;left:463.65px;width:329.85px">10:00 AM - 7:00 PM</div>
<div class="bar dk" style="top:169.66px;left:390.35px;width:329.85px">8:00 AM - 5:00 PM</div>
<div class="bar red" style="top:182.23px;left:390.35px;width:329.85px">PTO/Vacation</div>
<div class="bar dk" style="top:194.79px;left:317.05px;width:329.85px">6:00 AM - 3:00 PM</div>
<div class="bar lt" style="top:207.36px;left:390.35px;width:329.85px">8:00 AM - 5:00 PM</div>
<div class="bar dk" style="top:219.92px;left:610.25px;width:329.85px">2:00 PM - 11:00 PM</div>
<div class="bar lt" style="top:232.48px;left:317.05px;width:329.85px">6:00 AM - 3:00 PM</div>
<div class="bar dk" style="top:245.05px;left:610.25px;width:329.85px">2:00 PM - 11:00 PM</div>
<div class="bar lt" style="top:257.61px;left:610.25px;width:329.85px">2:00 PM - 11:00 PM</div>
<div class="bar dk" style="top:270.18px;left:463.65px;width:329.85px">10:00 AM - 7:00 PM</div>
<div class="bar red" style="top:282.74px;left:390.35px;width:329.85px">PTO/Vacation</div>
<div class="bar dk" style="top:295.30px;left:463.65px;width:329.85px">10:00 AM - 7:00 PM</div>
<div class="bar lt" style="top:307.87px;left:317.05px;width:329.85px">6:00 AM - 3:00 PM</div>
<div class="bar dk" style="top:320.43px;left:390.35px;width:329.85px">8:00 AM - 5:00 PM</div>
<div class="bar lt" style="top:333.00px;left:390.35px;width:329.85px">8:00 AM - 5:00 PM</div>
<div class="bar dk" style="top:345.56px;left:463.65px;width:329.85px">10:00 AM - 7:00 PM</div>
<div class="bar lt" style="top:358.12px;left:317.05px;width:329.85px">6:00 AM - 3:00 PM</div>
<div class="bar dk" style="top:370.69px;left:390.35px;width:329.85px">8:00 AM - 5:00 PM</div>
<div class="bar red" style="top:383.25px;left:390.35px;width:329.85px">PTO/Vacation</div>
<div class="bar dk" style="top:395.82px;left:390.35px;width:329.85px">8:00 AM - 5:00 PM</div>
<div class="bar lt" style="top:408.38px;left:463.65px;width:329.85px">10:00 AM - 7:00 PM</div>
<div class="bar dk" style="top:420.94px;left:390.35px;width:329.85px">8:00 AM - 5:00 PM</div>
<div class="bar lt" style="top:433.51px;left:317.05px;width:329.85px">6:00 AM - 3:00 PM</div>
<div class="bar dk" style="top:446.07px;left:390.35px;width:329.85px">8:00 AM - 5:00 PM</div>
<div class="bar lt" style="top:458.64px;left:390.35px;width:329.85px">8:00 AM - 5:00 PM</div>
<div class="bar dk" style="top:471.20px;left:610.25px;width:329.85px">2:00 PM - 11:00 PM</div>
<div class="bar lt" style="top:483.76px;left:317.05px;width:329.85px">6:00 AM - 3:00 PM</div>
<div class="bar dk" style="top:496.33px;left:390.35px;width:329.85px">8:00 AM - 5:00 PM</div>
<div class="bar lt" style="top:508.89px;left:317.05px;width:329.85px">6:00 AM - 3:00 PM</div>
<div class="bar dk" style="top:521.46px;left:390.35px;width:329.85px">8:00 AM - 5:00 PM</div>
<div class="bar lt" style="top:534.02px;left:390.35px;width:329.85px">8:00 AM - 5:00 PM</div>
<div class="dept" style="top:156.60px;height:87.95px;line-height:87.95px;background:#fff">Administration</div>
<div class="dept" style="top:244.55px;height:50.26px;line-height:50.26px;background:#f3f3f3">Construction</div>
<div class="dept" style="top:294.80px;height:75.38px;line-height:75.38px;background:#f3f3f3">Sales</div>
<div class="dept" style="top:370.19px;height:12.56px;line-height:12.56px;background:#f3f3f3">Administration</div>
<div class="dept" style="top:382.75px;height:87.95px;line-height:87.95px;background:#fff">Construction</div>
<div class="dept" style="top:470.70px;height:62.82px;line-height:62.82px;background:#f3f3f3">Inspection</div>
<div class="dept" style="top:533.52px;height:12.56px;line-height:12.56px;background:#fff">Sales</div>
<div class="br" style="top:156.60px;height:213.59px;line-height:213.59px;background:#fff">New York</div>
<div class="br" style="top:370.19px;height:175.90px;line-height:175.90px;background:#f3f3f3">Seattle</div>
<div class="hl" style="left:280.72px">5AM</div>
<div class="hl" style="left:317.38px">6AM</div>
<div class="tk" style="left:316.55px"></div>
<div class="hl" style="left:354.02px">7AM</div>
<div class="tk" style="left:353.20px"></div>
<div class="hl" style="left:390.67px">8AM</div>
<div class="tk" style="left:389.85px"></div>
<div class="hl" style="left:427.32px">9AM</div>
<div class="tk" style="left:426.50px"></div>
<div class="hl" style="left:463.97px">10AM</div>
<div class="tk" style="left:463.15px"></div>
<div class="hl" style="left:500.62px">11AM</div>
<div class="tk" style="left:499.80px"></div>
<div class="hl" style="left:537.27px">12PM</div>
<div class="tk" style="left:536.45px"></div>
<div class="hl" style="left:573.92px">1PM</div>
<div class="tk" style="left:573.10px"></div>
<div class="hl" style="left:610.58px">2PM</div>
<div class="tk" style="left:609.75px"></div>
<div class="hl" style="left:647.22px">3PM</div>
<div class="tk" style="left:646.40px"></div>
<div class="hl" style="left:683.88px">4PM</div>
<div class="tk" style="left:683.05px"></div>
<div class="hl" style="left:720.52px">5PM</div>
<div class="tk" style="left:719.70px"></div>
<div class="hl" style="left:757.17px">6PM</div>
<div class="tk" style="left:756.35px"></div>
<div class="hl" style="left:793.82px">7PM</div>
<div class="tk" style="left:793.00px"></div>
<div class="hl" style="left:830.47px">8PM</div>
<div class="tk" style="left:829.65px"></div>
<div class="hl" style="left:867.12px">9PM</div>
<div class="tk" style="left:866.30px"></div>
<div class="hl" style="left:903.77px">10PM</div>
<div class="tk" style="left:902.95px"></div>
</div>
</div>
</body></html>
